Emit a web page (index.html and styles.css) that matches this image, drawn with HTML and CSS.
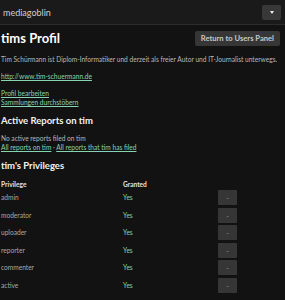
FILE: index.html
```html
<!DOCTYPE html>
<html lang="de">

<head>
    <meta charset="UTF-8">
    <meta name="viewport" content="width=device-width, initial-scale=1.0">
    <title>tims Profil</title>
    <link rel="stylesheet" href="styles.css">
</head>

<body>
    <header class="header">
        <span class="logo">mediagoblin</span>
        <button class="toggle"><span class="arrow"></span></button>
    </header>
    <div class="container">
        <div class="title-row">
            <h1>tims Profil</h1>
            <a class="button-action" href="#">Return to Users Panel</a>
        </div>
        <p>Tim Schürmann ist Diplom-Informatiker und derzeit als freier Autor und IT-Journalist unterwegs.</p>
        <p><a href="#">http://www.tim-schuermann.de</a></p>
        <p>
            <a href="#">Profil bearbeiten</a><br>
            <a href="#">Sammlungen durchstöbern</a>
        </p>
        <h2>Active Reports on tim</h2>
        <p>
            No active reports filed on tim<br>
            <a href="#">All reports on tim</a> · <a href="#">All reports that tim has filed</a>
        </p>
        <h2>tim's Privileges</h2>
        <div class="privileges">
            <div class="th">Privilege</div>
            <div class="th">Granted</div>
            <div class="th"></div>

            <div class="td">admin</div>
            <div class="td yes">Yes</div>
            <div class="td"><button class="revoke">-</button></div>

            <div class="td">moderator</div>
            <div class="td yes">Yes</div>
            <div class="td"><button class="revoke">-</button></div>

            <div class="td">uploader</div>
            <div class="td yes">Yes</div>
            <div class="td"><button class="revoke">-</button></div>

            <div class="td">reporter</div>
            <div class="td yes">Yes</div>
            <div class="td"><button class="revoke">-</button></div>

            <div class="td">commenter</div>
            <div class="td yes">Yes</div>
            <div class="td"><button class="revoke">-</button></div>

            <div class="td">active</div>
            <div class="td yes">Yes</div>
            <div class="td"><button class="revoke">-</button></div>
        </div>
    </div>
</body>

</html>
```

FILE: styles.css
```css
body {
    margin: 0;
    background-color: #121212;
    color: #b8b8b8;
    font-family: Lato, "Open Sans", sans-serif;
    font-size: 6.6px;
    line-height: 9px;
}

a {
    color: #86d4b1;
}

.header {
    display: flex;
    align-items: center;
    justify-content: space-between;
    height: 24px;
    padding: 0 4px 0 3px;
    background-color: #1a1a1a;
    border-bottom: 1px solid #2c2c2c;
}

.logo {
    font-size: 9px;
    color: #d0d0d0;
}

.toggle {
    display: flex;
    align-items: center;
    justify-content: center;
    width: 19px;
    height: 15px;
    padding: 0;
    border: none;
    border-radius: 2px;
    background-color: #383838;
}

.arrow {
    border-left: 2px solid transparent;
    border-right: 2px solid transparent;
    border-top: 3px solid #f0f0f0;
}

.container {
    padding: 6px 5px 0 1px;
}

.title-row {
    display: flex;
    align-items: center;
    justify-content: space-between;
    margin-bottom: 9px;
}

h1 {
    margin: 0;
    font-size: 13px;
    line-height: 15px;
    color: #fff;
}

.button-action {
    display: block;
    height: 15px;
    padding: 0 6px;
    line-height: 15px;
    font-size: 7.6px;
    font-weight: bold;
    color: #c8c8c8;
    text-decoration: none;
    background-color: #363636;
    border-radius: 2px;
}

p {
    margin: 0 0 8px;
}

h2 {
    margin: 0 0 7px;
    font-size: 9.5px;
    line-height: 12px;
    color: #f2f2f2;
}

.privileges {
    display: grid;
    grid-template-columns: 122px 95px auto;
    grid-template-rows: 10px;
    grid-auto-rows: 17.5px;
}

.th {
    font-weight: bold;
    color: #e0e0e0;
    line-height: 10px;
}

.td {
    display: flex;
    align-items: center;
    color: #a8a8a8;
}

.td.yes {
    color: #86d4b1;
}

.revoke {
    width: 19px;
    height: 15px;
    padding: 0;
    border: none;
    border-radius: 1px;
    background-color: #363636;
    color: #bbb;
    font-size: 6px;
    font-family: Lato, sans-serif;
}
```
